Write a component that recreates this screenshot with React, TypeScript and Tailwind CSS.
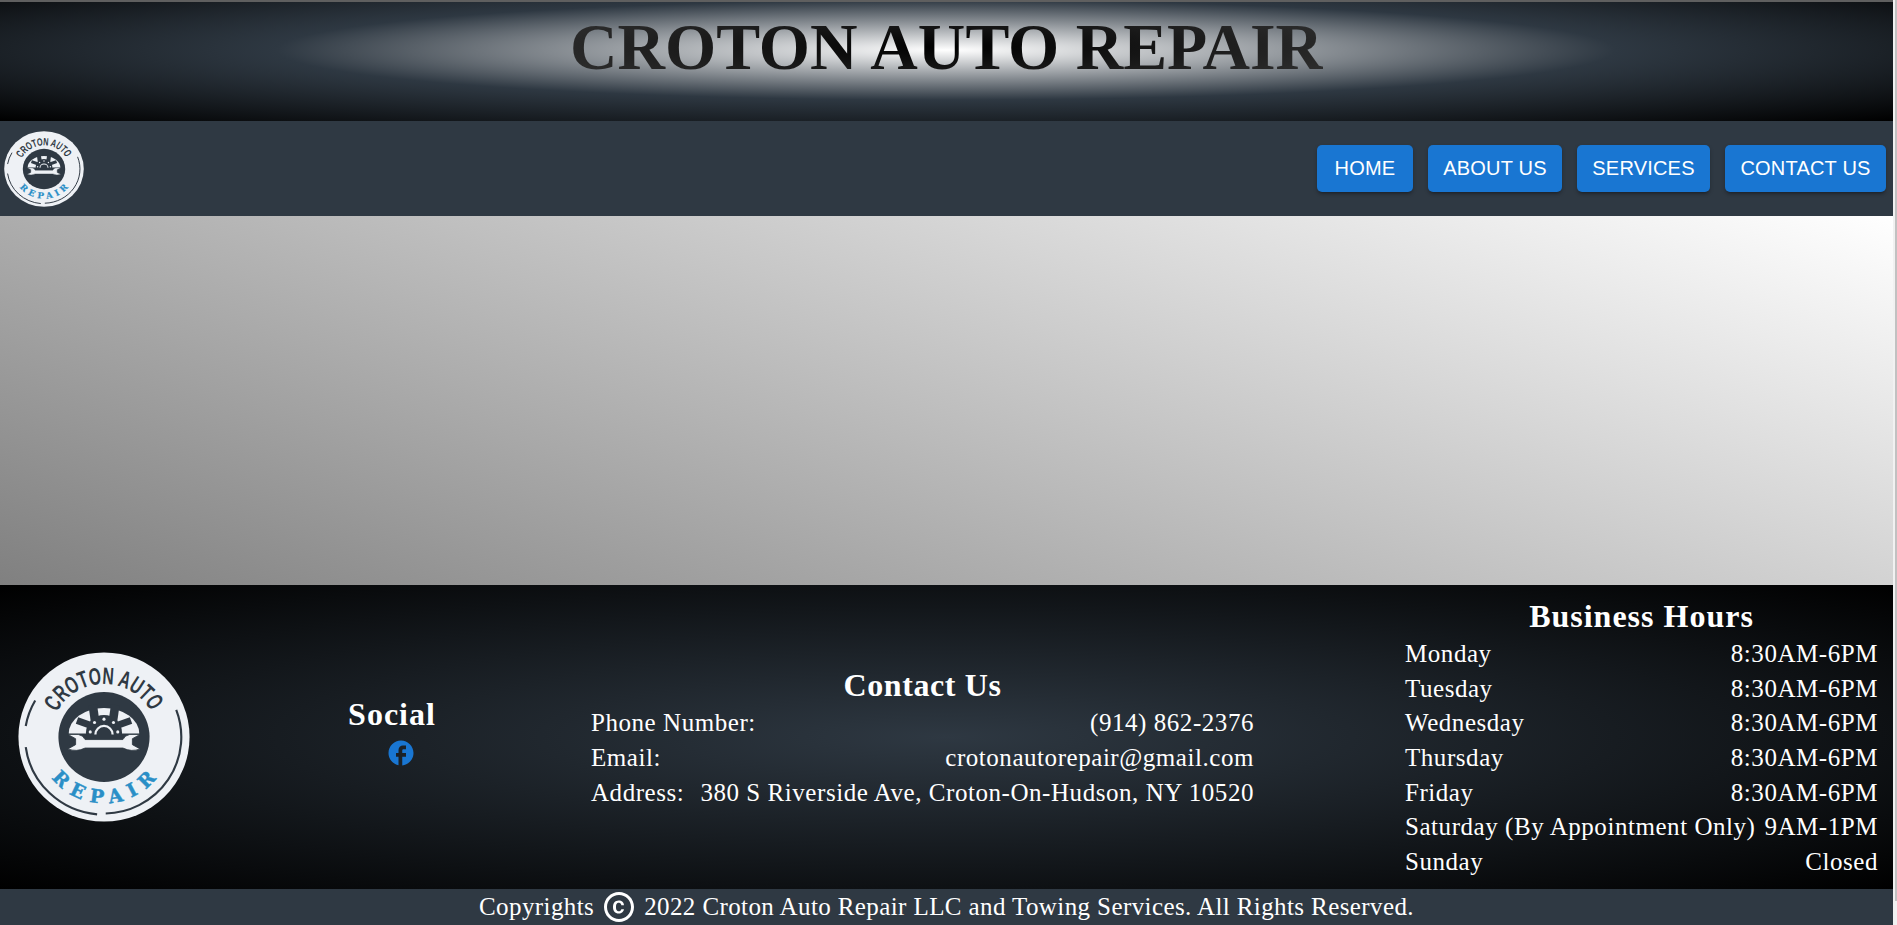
import React from "react";

const serif = "font-['Liberation_Serif',Georgia,serif]";

function Logo({ size, h }: { size: number; h: number }) {
  const id = `l${size}`;
  return (
    <svg viewBox="0 0 200 200" width={size} height={h} preserveAspectRatio="none" className="shrink-0 block">
      <defs>
        <path id={`${id}t`} d="M 45 71 A 62 62 0 0 1 155 71" />
        <path id={`${id}b`} d="M 22 100 A 78 78 0 0 0 178 100" />
      </defs>
      <circle cx="100" cy="100" r="99.5" fill="#eef1f5" />
      <g fill="none" stroke="#2f3943" strokeWidth="2.5">
        <path d="M 9 87 A 91 91 0 0 1 20 57" />
        <path d="M 184 68 A 90 90 0 0 1 102 190" />
        <path d="M 9 112 A 92 92 0 0 0 92 191" />
      </g>
      <text fontFamily="'Liberation Sans',sans-serif" fontWeight="700" fontSize="28" fill="#2f3943" textLength="134" lengthAdjust="spacingAndGlyphs">
        <textPath href={`#${id}t`}>CROTON AUTO</textPath>
      </text>
      <circle cx="100" cy="100" r="53" fill="#2f3943" />
      <path d="M 59 96 A 41 30 0 0 1 141 96 Z" fill="#eef1f5" />
      <g fill="#2f3943">
        <circle cx="100" cy="95" r="21" />
        <rect x="84" y="62" width="10" height="30" transform="rotate(-8 89 77)" />
        <rect x="106" y="62" width="10" height="30" transform="rotate(8 111 77)" />
        <rect x="68" y="80" width="20" height="8" transform="rotate(20 78 84)" />
        <rect x="112" y="80" width="20" height="8" transform="rotate(-20 122 84)" />
      </g>
      <path d="M 90 97 A 10 10 0 0 1 110 97" fill="none" stroke="#eef1f5" strokeWidth="2.6" />
      <g fill="#eef1f5">
        <circle cx="84" cy="94" r="1.8" />
        <circle cx="89" cy="83" r="1.8" />
        <circle cx="100" cy="79" r="1.8" />
        <circle cx="111" cy="83" r="1.8" />
        <circle cx="116" cy="94" r="1.8" />
      </g>
      <path
        d="M58 97 L70 97 Q76 98 78 103 L122 103 Q124 98 130 97 L142 97 L133 102 L133 109 L142 114 Q132 118 122 113 L78 113 Q68 118 58 114 L67 109 L67 102 Z"
        fill="#eef1f5"
        stroke="#2f3943"
        strokeWidth="1"
      />
      <text fontFamily="'DejaVu Serif',serif" fontWeight="700" fontSize="22" fill="#2a8fc7" stroke="#2a8fc7" strokeWidth="0.5" textLength="140" lengthAdjust="spacing">
        <textPath href={`#${id}b`} startOffset="52">REPAIR</textPath>
      </text>
    </svg>
  );
}

const hours: [string, string][] = [
  ["Monday", "8:30AM-6PM"],
  ["Tuesday", "8:30AM-6PM"],
  ["Wednesday", "8:30AM-6PM"],
  ["Thursday", "8:30AM-6PM"],
  ["Friday", "8:30AM-6PM"],
  ["Saturday (By Appointment Only)", "9AM-1PM"],
  ["Sunday", "Closed"],
];

const contact: [string, string][] = [
  ["Phone Number:", "(914) 862-2376"],
  ["Email:", "crotonautorepair@gmail.com"],
  ["Address:", "380 S Riverside Ave, Croton-On-Hudson, NY 10520"],
];

function NavButton({ label, w }: { label: string; w: string }) {
  return (
    <a className={`${w} flex h-[47px] items-center justify-center rounded-[5px] bg-[#1976d2] pb-[2px] text-[20px] tracking-[0.2px] text-white shadow-[0_3px_3px_-2px_rgba(0,0,0,0.3),0_2px_4px_rgba(0,0,0,0.2)]`}>
      {label}
    </a>
  );
}

function Row({ a, b }: { a: string; b: string }) {
  return (
    <div className="flex h-[34.6px] items-center justify-between text-[25px] leading-[34px] tracking-[0.55px]">
      <span>{a}</span>
      <span>{b}</span>
    </div>
  );
}

export default function App() {
  return (
    <div className="flex h-[925px] w-[1897px] overflow-hidden bg-[#f1f1f1]">
      <div className="flex w-[1893px] shrink-0 flex-col">
        <div className="h-[2px] bg-[#5f5f5f]" />
        <header className="flex h-[119px] items-start justify-center bg-[radial-gradient(ellipse_1338px_100px_at_946px_48px,#ffffff,#2e3842_50%,#000000)]">
          <h1 className={`mt-[5px] bg-[radial-gradient(#000000,#383838)] bg-clip-text text-[65.8px] leading-[80px] font-bold text-transparent ${serif}`}>
            CROTON AUTO REPAIR
          </h1>
        </header>
        <nav className="flex h-[95px] items-center justify-between bg-[#2f3943] pr-[7px] pl-[4px]">
          <Logo size={80} h={76} />
          <div className="flex gap-[15px] font-['Liberation_Sans',Arial,sans-serif]">
            <NavButton label="HOME" w="w-[96px]" />
            <NavButton label="ABOUT US" w="w-[134px]" />
            <NavButton label="SERVICES" w="w-[133px]" />
            <NavButton label="CONTACT US" w="w-[161px]" />
          </div>
        </nav>
        <main className="h-[369px] bg-[linear-gradient(20deg,#808080,#ffffff)]" />
        <footer className={`flex h-[304px] items-center bg-[radial-gradient(#2e3842,#000000)] pl-[18px] text-white ${serif}`}>
          <Logo size={172} h={170} />
          <div className="mb-[12px] ml-[158px] flex w-[88px] flex-col">
            <h2 className="text-center text-[32px] leading-[40px] font-bold tracking-[1px] whitespace-nowrap">Social</h2>
            <svg viewBox="0 0 24 24" width={30} height={30} className="mt-[4px] ml-[38px] fill-[#1976d2]">
              <path d="M22 12c0-5.52-4.48-10-10-10S2 6.48 2 12c0 4.84 3.44 8.87 8 9.8V15H8v-3h2V9.5C10 7.57 11.57 6 13.5 6H16v3h-2c-.55 0-1 .45-1 1v2h3v3h-3v6.95c5.05-.5 9-4.76 9-9.95z" />
            </svg>
          </div>
          <div className="ml-[155px] flex w-[663px] flex-col">
            <h2 className="text-center text-[32px] leading-[42px] font-bold tracking-[0.6px]">Contact Us</h2>
            {contact.map(([a, b]) => (
              <Row key={a} a={a} b={b} />
            ))}
          </div>
          <div className="ml-[151px] flex w-[473px] flex-col">
            <h2 className="text-center text-[32px] leading-[42px] font-bold tracking-[1px]">Business Hours</h2>
            {hours.map(([a, b]) => (
              <Row key={a} a={a} b={b} />
            ))}
          </div>
        </footer>
        <div className={`flex h-[36px] shrink-0 items-center justify-center bg-[#2f3943] text-[25px] tracking-[0.4px] text-white ${serif}`}>
          <span>Copyrights</span>
          <svg viewBox="0 0 24 24" width={36} height={36} className="mx-[7px] fill-white">
            <path d="M10.08 10.86c.05-.33.16-.62.3-.87s.34-.46.59-.62c.24-.15.54-.22.91-.23.23.01.44.05.63.13.2.09.38.21.52.36s.25.33.34.53.13.42.14.64h1.79c-.02-.47-.11-.9-.28-1.29s-.4-.73-.7-1.01-.66-.5-1.08-.66-.88-.23-1.39-.23c-.65 0-1.22.11-1.7.34s-.88.53-1.2.92-.56.84-.71 1.36S8 11.29 8 11.87v.27c0 .58.08 1.12.23 1.64s.39.97.71 1.35.72.69 1.2.91c.48.22 1.05.34 1.7.34.47 0 .91-.08 1.32-.23s.77-.36 1.08-.63.56-.58.74-.94.29-.74.3-1.15h-1.79c-.01.21-.06.4-.15.58s-.21.33-.36.46-.32.23-.52.3c-.19.07-.39.09-.6.1-.36-.01-.66-.08-.89-.23-.25-.16-.45-.37-.59-.62s-.25-.55-.3-.88-.08-.67-.08-1v-.27c0-.35.03-.68.08-1.01zM12 2C6.48 2 2 6.48 2 12s4.48 10 10 10 10-4.48 10-10S17.52 2 12 2zm0 18c-4.41 0-8-3.59-8-8s3.59-8 8-8 8 3.59 8 8-3.59 8-8 8z" />
          </svg>
          <span>2022 Croton Auto Repair LLC and Towing Services. All Rights Reserved.</span>
        </div>
      </div>
      <div className="flex w-[4px] shrink-0 justify-end">
        <div className="h-[901px] w-[2px] bg-[#c1c1c1]" />
      </div>
    </div>
  );
}
